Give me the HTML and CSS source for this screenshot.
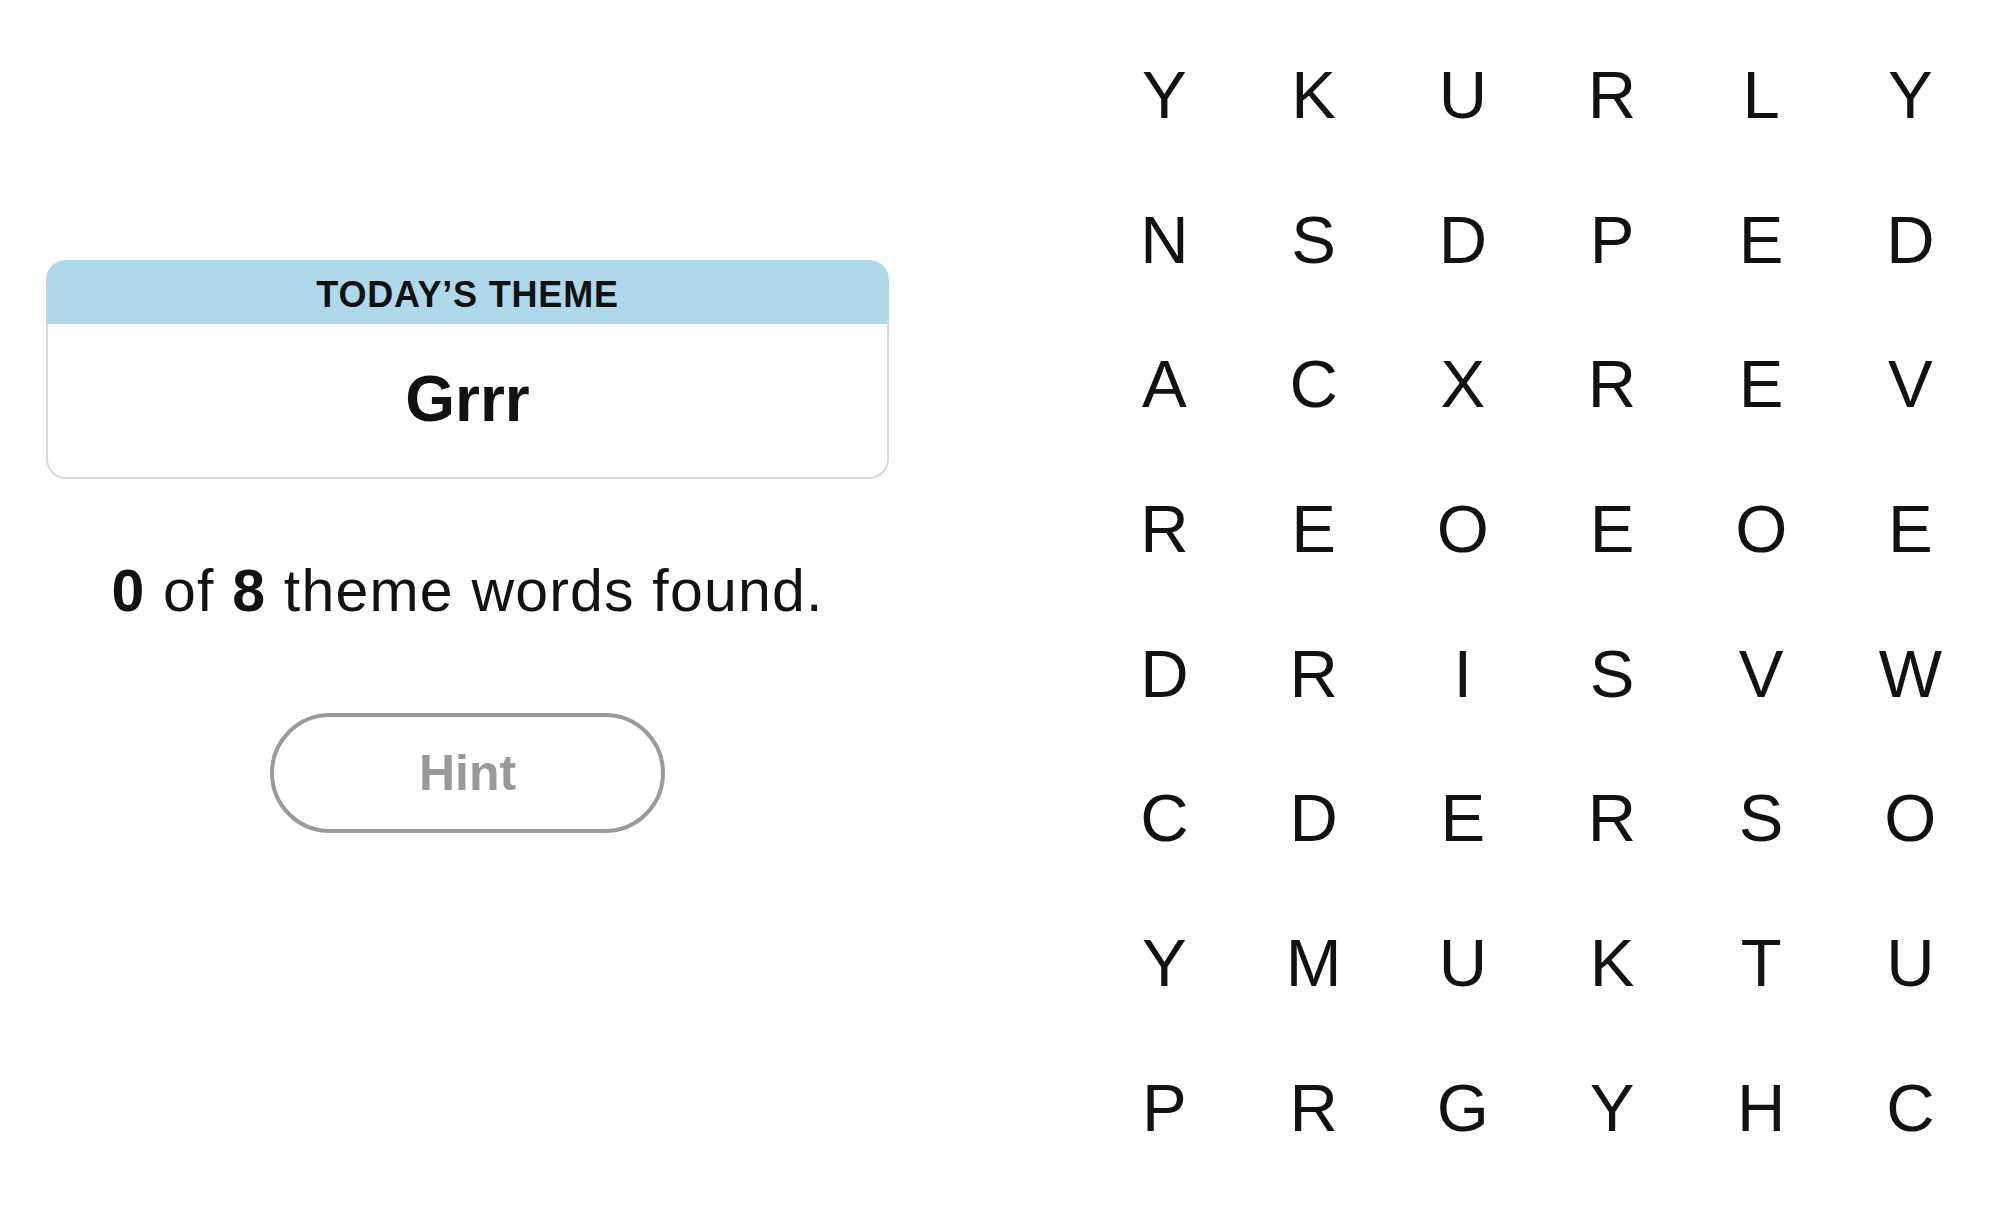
FILE: index.html
```html
<!DOCTYPE html>
<html lang="en">
<head>
    <meta charset="UTF-8">
    <title>Strands</title>
    <link rel="stylesheet" href="styles.css">
</head>
<body>
    <div class="game">
        <div class="panel">
            <div class="theme-card">
                <div class="theme-header">TODAY’S THEME</div>
                <div class="theme-body">Grrr</div>
            </div>
            <p class="progress"><b>0</b> of <b>8</b> theme words found.</p>
            <button class="hint-btn" disabled>Hint</button>
        </div>
        <div class="board">
            <span>Y</span><span>K</span><span>U</span><span>R</span><span>L</span><span>Y</span>
            <span>N</span><span>S</span><span>D</span><span>P</span><span>E</span><span>D</span>
            <span>A</span><span>C</span><span>X</span><span>R</span><span>E</span><span>V</span>
            <span>R</span><span>E</span><span>O</span><span>E</span><span>O</span><span>E</span>
            <span>D</span><span>R</span><span>I</span><span>S</span><span>V</span><span>W</span>
            <span>C</span><span>D</span><span>E</span><span>R</span><span>S</span><span>O</span>
            <span>Y</span><span>M</span><span>U</span><span>K</span><span>T</span><span>U</span>
            <span>P</span><span>R</span><span>G</span><span>Y</span><span>H</span><span>C</span>
        </div>
    </div>
</body>
</html>
```

FILE: styles.css
```css
body {
    margin: 0;
    font-family: "Liberation Sans", Arial, sans-serif;
    color: #121212;
    background-color: #ffffff;
}
.game {
    display: flex;
    align-items: flex-start;
    height: 1206px;
    padding: 23px 14px 0 46px;
    box-sizing: border-box;
}
.panel {
    width: 843px;
    padding-top: 237px;
    display: flex;
    flex-direction: column;
    align-items: center;
}
.theme-card {
    width: 100%;
}
.theme-header {
    height: 64px;
    box-sizing: border-box;
    padding-top: 6px;
    background-color: #afd8eb;
    border-radius: 20px 20px 0 0;
    display: flex;
    align-items: center;
    justify-content: center;
    font-size: 36px;
    font-weight: bold;
    letter-spacing: 0.8px;
}
.theme-body {
    height: 155px;
    box-sizing: border-box;
    border: 2px solid #d9d9d9;
    border-top: none;
    border-radius: 0 0 20px 20px;
    display: flex;
    align-items: center;
    justify-content: center;
    padding-bottom: 3px;
    font-size: 64px;
    font-weight: bold;
}
.progress {
    margin: 78px 0 0 0;
    font-size: 59px;
    line-height: 68px;
    letter-spacing: 1.2px;
}
.hint-btn {
    margin-top: 88px;
    width: 395px;
    height: 120px;
    border: 4px solid #9a9a9a;
    border-radius: 60px;
    background-color: #ffffff;
    color: #999999;
    font-family: inherit;
    font-size: 50px;
    font-weight: bold;
    padding: 0;
}
.board {
    margin-left: auto;
    display: grid;
    grid-template-columns: repeat(6, 149.2px);
    grid-template-rows: repeat(8, 144.7px);
}
.board span {
    font-size: 67px;
    line-height: 144.7px;
    text-align: center;
}
```
